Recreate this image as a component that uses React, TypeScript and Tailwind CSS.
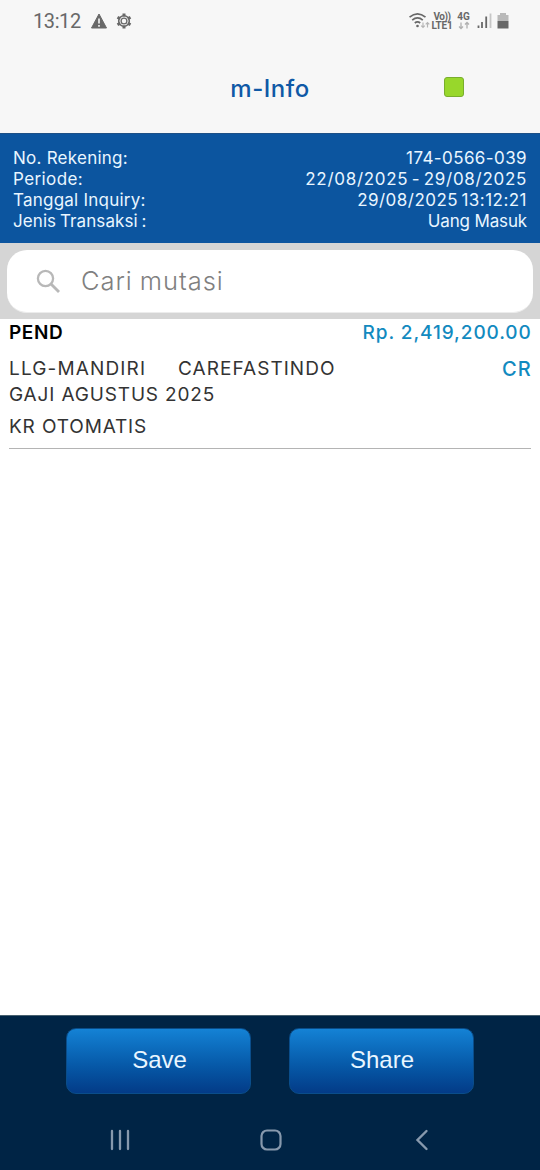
type InfoRow = {
  label: string;
  value: string;
  labelClass: string;
  valueClass: string;
};

const INFO_ROWS: InfoRow[] = [
  {
    label: "No. Rekening:",
    value: "174-0566-039",
    labelClass: "tracking-[0.25px]",
    valueClass: "tracking-[0.4px]",
  },
  {
    label: "Periode:",
    value: "22/08/2025 - 29/08/2025",
    labelClass: "tracking-[0.4px]",
    valueClass: "tracking-[0.7px] [word-spacing:-2px]",
  },
  {
    label: "Tanggal Inquiry:",
    value: "29/08/2025 13:12:21",
    labelClass: "tracking-[0.23px]",
    valueClass: "tracking-[0.48px] [word-spacing:-2px]",
  },
  {
    label: "Jenis Transaksi :",
    value: "Uang Masuk",
    labelClass: "tracking-[0.08px] [word-spacing:-1px]",
    valueClass: "tracking-[-0.15px]",
  },
];

function StatusBar() {
  return (
    <div className="flex h-[42px] items-center justify-between pl-[33px] pr-[31px] text-[#686868]">
      <div className="flex items-center">
        <span className="w-[57px] font-['Roboto',sans-serif] text-[20px] leading-[42px] tracking-[-0.4px]">13:12</span>
        <svg width="18" height="16" viewBox="0 0 17 16" className="mb-[1px]">
          <path d="M8.5 1 16 15H1Z" fill="currentColor" stroke="currentColor" strokeLinejoin="round" />
          <path d="M8.5 5.5v5M8.5 12v1.8" stroke="#f7f7f7" strokeWidth="1.6" />
        </svg>
        <svg width="16" height="16" viewBox="0 0 16 16" fill="none" stroke="currentColor" className="ml-[8px] mb-[1px]">
          <path d="M8 .5v3M8 12.500v3M1.500 4.250l2.600 1.500M11.900 10.250l2.600 1.500M1.500 11.750l2.600-1.500M11.900 5.750l2.600-1.500" strokeWidth="3" />
          <circle cx="8" cy="8" r="5.300" strokeWidth="1.600" />
          <circle cx="8" cy="8" r="2.900" strokeWidth="1.300" />
        </svg>
      </div>
      <div className="flex items-center font-['Roboto',sans-serif]">
        <svg width="22" height="18" viewBox="0 0 22 18" fill="none" stroke="currentColor" className="mb-[1px]">
          <path d="M.5 5.200Q8.500 -1.500 16.500 5.200" strokeWidth="1.700" />
          <path d="M3.200 8.200Q8.500 3.700 13.800 8.200" strokeWidth="1.700" />
          <path d="M5.800 11Q8.500 8.700 11.200 11" strokeWidth="1.700" />
          <circle cx="8.500" cy="14" r="1.300" fill="currentColor" stroke="none" />
          <path d="M14 10.500v5M12.200 13.700 14 15.500l1.800-1.800M18.500 15.500v-5M16.700 12.300l1.800-1.800 1.800 1.800" stroke="#b5b5b5" strokeWidth="1.200" />
        </svg>
        <div className="ml-[1px] flex w-[20px] flex-col items-center text-[10px] font-bold leading-[9px]">
          <span className="whitespace-nowrap tracking-[-0.5px]">Vo))</span>
          <span className="tracking-[-0.2px]">LTE1</span>
        </div>
        <div className="ml-[5px] flex w-[13px] flex-col items-center">
          <span className="text-[10px] font-bold leading-[9px]">4G</span>
          <svg width="12" height="9" viewBox="0 0 12 9" fill="none" stroke="#b0b0b0" strokeWidth="1.300">
            <path d="M3 1.500v6M1 5.500l2 2 2-2M9 7.500v-6M7 3.500l2-2 2 2" />
          </svg>
        </div>
        <svg width="15" height="17" viewBox="0 0 15 17" className="ml-[7px] mb-[2px]">
          <path d="M1.500 16v-2.500M5 16v-6M9.200 16V4.500" stroke="currentColor" strokeWidth="1.800" />
          <path d="M13.500 16V1.500" stroke="#c6c6c6" strokeWidth="1.800" />
        </svg>
        <svg width="12" height="16" viewBox="0 0 12 16" className="ml-[5px] mb-[1px]">
          <path d="M3 0h6v2h2.500v6H.5V2H3Z" fill="#b9b9b9" />
          <path d="M.5 8h11v7.500H.5Z" fill="currentColor" />
        </svg>
      </div>
    </div>
  );
}

export default function App() {
  return (
    <div className="flex h-[1170px] w-[540px] flex-col overflow-hidden bg-white font-['Inter',sans-serif]">
      <header className="h-[133px] bg-[#f7f7f7]">
        <StatusBar />
        <div className="grid h-[91px] grid-cols-[1fr_auto_1fr] items-center">
          <span />
          <h1 className="pt-[2px] text-[24px] font-medium leading-[30px] tracking-[0.5px] text-[#0f59a6]">m-Info</h1>
          <div className="mb-[1px] ml-[134px] h-5 w-5 rounded-[3px] border border-[#79ae2d] bg-[#98d72b]" />
        </div>
      </header>

      <section className="h-[110px] border-t border-[#1d5086] bg-[#0c559f] px-[13px] pt-[14px] text-[17px] leading-[21px] text-[#e9f6ff]">
        {INFO_ROWS.map((row) => (
          <div key={row.label} className="flex justify-between whitespace-nowrap">
            <span className={row.labelClass}>{row.label}</span>
            <span className={row.valueClass}>{row.value}</span>
          </div>
        ))}
      </section>

      <div className="h-[76px] bg-[#d5d5d5] px-[7px] pt-[7px]">
        <div className="flex h-[63px] items-center rounded-[20px] border-b border-[#ececec] bg-white pl-[29px]">
          <svg width="25" height="25" viewBox="0 0 25 25" fill="none" stroke="#b8b8b8">
            <circle cx="9.500" cy="9.500" r="7.600" strokeWidth="2.300" />
            <path d="m15 15 8 8" strokeWidth="2.800" />
          </svg>
          <span className="ml-[20px] text-[25.500px] font-light leading-[32px] tracking-[0.95px] text-[#808080] [word-spacing:-1px]">
            Cari mutasi
          </span>
        </div>
      </div>

      <main className="flex-1 px-[9px] text-[19px] text-[#333333]">
        <div className="border-b border-[#b4b4b4] pb-[8px]">
          <div className="flex h-[28px] items-center justify-between">
            <span className="font-semibold tracking-[0.6px] text-black">PEND</span>
            <span className="-mr-[0.7px] font-medium tracking-[0.9px] text-[#128abf]">Rp. 2,419,200.00</span>
          </div>
          <div className="mt-[9px] flex justify-between leading-[26px]">
            <div>
              <div className="flex">
                <span className="w-[169px] tracking-[1.15px]">LLG-MANDIRI</span>
                <span className="tracking-[1.05px]">CAREFASTINDO</span>
              </div>
              <p className="tracking-[0.85px]">GAJI AGUSTUS 2025</p>
            </div>
            <span className="-mr-[0.7px] text-[20px] font-medium tracking-[1px] text-[#128abf]">CR</span>
          </div>
          <p className="mt-[6px] leading-[26px] tracking-[0.85px]">KR OTOMATIS</p>
        </div>
      </main>

      <footer className="h-[155px] border-t border-[#47606f] bg-[#002445]">
        <div className="flex justify-center gap-[38px] pt-[12px] font-['Liberation_Sans',sans-serif] text-[24px] text-[#e9f6ff]">
          <button className="h-[66px] w-[185px] rounded-[10px] border border-[#0a4d8a] bg-linear-to-b from-[#1482d5] to-[#033b87] pb-[3px] pl-[2px]">
            Save
          </button>
          <button className="h-[66px] w-[185px] rounded-[10px] border border-[#0a4d8a] bg-linear-to-b from-[#1482d5] to-[#033b87] pb-[3px] pl-[1px]">
            Share
          </button>
        </div>
        <div className="mt-[34px] flex items-center pl-[109px] text-[#8799ad]">
          <svg width="22" height="24" viewBox="0 0 22 24" stroke="currentColor" strokeWidth="2.300" strokeLinecap="round">
            <path d="M3 3v18M11 3v18M19 3v18" />
          </svg>
          <svg width="24" height="24" viewBox="0 0 24 24" fill="none" stroke="currentColor" strokeWidth="2.200" className="ml-[128px]">
            <rect x="2.500" y="2.500" width="19" height="19" rx="5.500" />
          </svg>
          <svg width="14" height="24" viewBox="0 0 14 24" fill="none" stroke="currentColor" strokeWidth="2.400" strokeLinecap="round" className="ml-[132px]">
            <path d="M11.500 3 2.500 12l9 9" />
          </svg>
        </div>
      </footer>
    </div>
  );
}
